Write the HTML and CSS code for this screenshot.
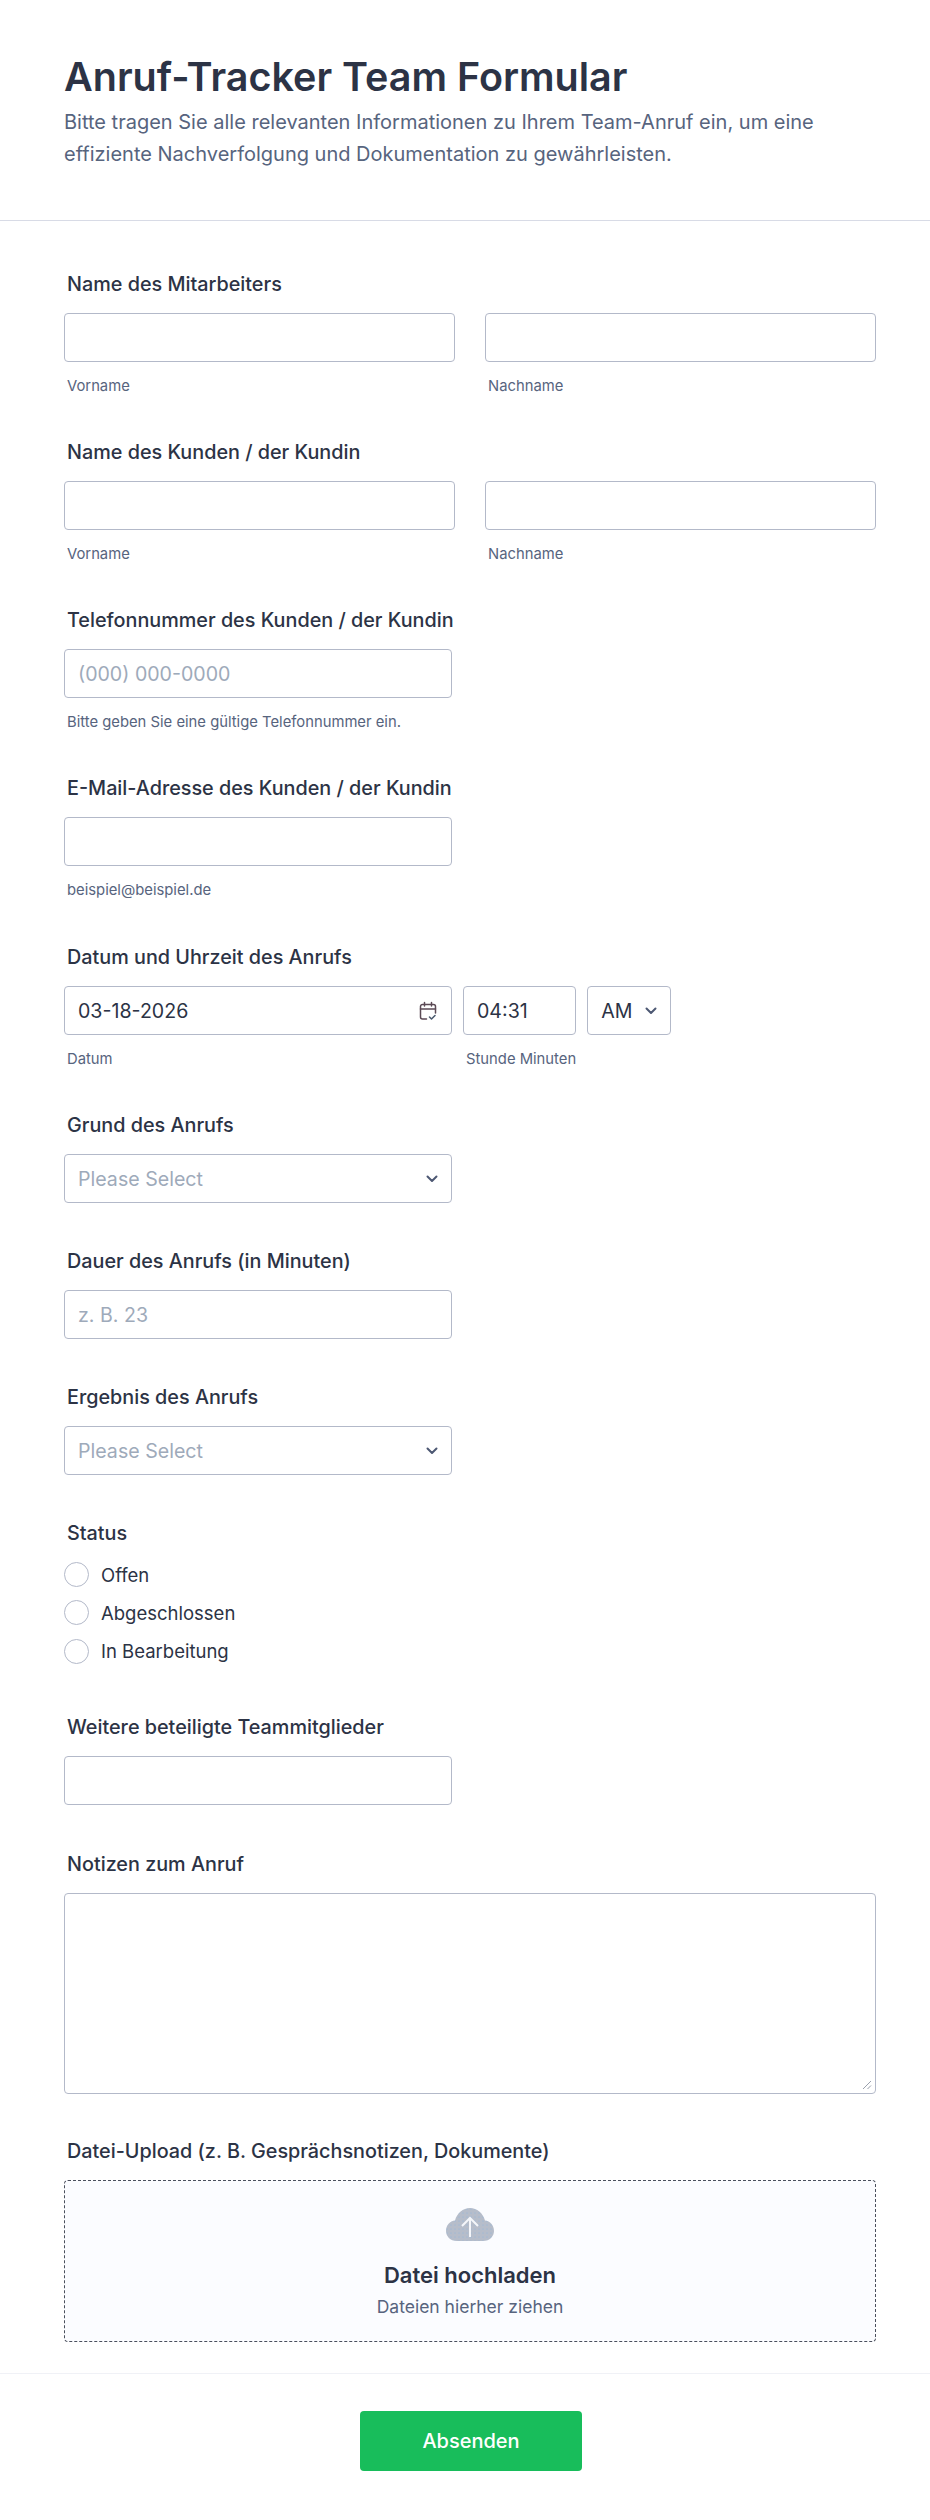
FILE: index.html
```html
<!DOCTYPE html>
<html lang="de">
<head>
<meta charset="utf-8">
<title>Anruf-Tracker Team Formular</title>
<link rel="stylesheet" href="styles.css">
</head>
<body>
<form class="form">
  <header class="head">
    <h1 class="title">Anruf-Tracker Team Formular</h1>
    <p class="desc">Bitte tragen Sie alle relevanten Informationen zu Ihrem Team-Anruf ein, um eine effiziente Nachverfolgung und Dokumentation zu gewährleisten.</p>
  </header>
  <div class="body">
    <div class="field">
      <div class="label">Name des Mitarbeiters</div>
      <div class="two">
        <div><div class="box"></div><div class="sub">Vorname</div></div>
        <div><div class="box"></div><div class="sub">Nachname</div></div>
      </div>
    </div>
    <div class="field">
      <div class="label">Name des Kunden / der Kundin</div>
      <div class="two">
        <div><div class="box"></div><div class="sub">Vorname</div></div>
        <div><div class="box"></div><div class="sub">Nachname</div></div>
      </div>
    </div>
    <div class="field">
      <div class="label">Telefonnummer des Kunden / der Kundin</div>
      <div class="box single ph">(000) 000-0000</div>
      <div class="sub">Bitte geben Sie eine gültige Telefonnummer ein.</div>
    </div>
    <div class="field email">
      <div class="label">E-Mail-Adresse des Kunden / der Kundin</div>
      <div class="box single"></div>
      <div class="sub">beispiel@beispiel.de</div>
    </div>
    <div class="field">
      <div class="label">Datum und Uhrzeit des Anrufs</div>
      <div class="dt">
        <div>
          <div class="box single val between">03-18-2026
            <svg class="cal" width="18" height="20" viewBox="0 0 18 20" fill="none" stroke="#5b4a55" stroke-width="1.5" stroke-linecap="round" stroke-linejoin="round"><path d="M7.500 18H3.500A2 2 0 0 1 1.500 16V5.500A2 2 0 0 1 3.500 3.500H14.500A2 2 0 0 1 16.500 5.500V12"/><path d="M1.500 8H16.500M5.500 1.500V5M12.500 1.500V5"/><path d="M10.500 16L12.500 18L16 14.500" stroke="#4a5a6e"/></svg>
          </div>
          <div class="sub">Datum</div>
        </div>
        <div>
          <div class="box time val">04:31</div>
          <div class="sub">Stunde Minuten</div>
        </div>
        <div class="box ampm val between">AM
          <svg width="12" height="8" viewBox="0 0 12 8" fill="none" stroke="#4d5873" stroke-width="2" stroke-linecap="round" stroke-linejoin="round"><path d="M1.500 1.500L6 6L10.500 1.500"/></svg>
        </div>
      </div>
    </div>
    <div class="field tight">
      <div class="label">Grund des Anrufs</div>
      <div class="box single ph between">Please Select
        <svg width="12" height="8" viewBox="0 0 12 8" fill="none" stroke="#4d5873" stroke-width="2" stroke-linecap="round" stroke-linejoin="round"><path d="M1.500 1.500L6 6L10.500 1.500"/></svg>
      </div>
    </div>
    <div class="field tight">
      <div class="label">Dauer des Anrufs (in Minuten)</div>
      <div class="box single ph">z. B. 23</div>
    </div>
    <div class="field tight">
      <div class="label">Ergebnis des Anrufs</div>
      <div class="box single ph between">Please Select
        <svg width="12" height="8" viewBox="0 0 12 8" fill="none" stroke="#4d5873" stroke-width="2" stroke-linecap="round" stroke-linejoin="round"><path d="M1.500 1.500L6 6L10.500 1.500"/></svg>
      </div>
    </div>
    <div class="field status">
      <div class="label">Status</div>
      <div class="radios">
        <div class="radio"><span class="dot"></span>Offen</div>
        <div class="radio"><span class="dot"></span>Abgeschlossen</div>
        <div class="radio"><span class="dot"></span>In Bearbeitung</div>
      </div>
    </div>
    <div class="field team">
      <div class="label">Weitere beteiligte Teammitglieder</div>
      <div class="box single"></div>
    </div>
    <div class="field notes">
      <div class="label">Notizen zum Anruf</div>
      <div class="box area">
        <svg class="grip" width="10" height="10" viewBox="0 0 10 10" fill="none" stroke="#9aa0ad" stroke-width="1"><path d="M1 9L9 1M5.500 9L9 5.500"/></svg>
      </div>
    </div>
    <div class="field last">
      <div class="label">Datei-Upload (z. B. Gesprächsnotizen, Dokumente)</div>
      <div class="drop">
        <svg class="cloud" width="48" height="34" viewBox="0 0 48 34">
          <defs><pattern id="dots" width="4" height="4" patternUnits="userSpaceOnUse"><rect width="4" height="4" fill="#b6bdca"/><circle cx="1" cy="1" r=".55" fill="#8fb4de"/></pattern></defs>
          <path fill="url(#dots)" d="M11 33C4 33 0 28 0 23C0 17 4 13 9 12.500C11 5 17 0 24 0C31 0 37 5 39 12.500C44 13 48 17 48 23C48 28 44 33 37 33Z"/>
          <path d="M24 29V10M16 18L24 10L32 18" fill="none" stroke="#f4f6fa" stroke-width="2"/>
        </svg>
        <div class="drop-t">Datei hochladen</div>
        <div class="drop-s">Dateien hierher ziehen</div>
      </div>
    </div>
  </div>
  <footer class="foot">
    <button type="button" class="send">Absenden</button>
  </footer>
</form>
</body>
</html>
```
FILE: styles.css
```css
* { box-sizing: border-box; }
html, body { margin: 0; padding: 0; background: #fff; }
body { font-family: Inter, "Liberation Sans", sans-serif; color: #2c3345; }
.form { width: 930px; height: 2520px; overflow: hidden; }
.head { height: 221px; padding: 53px 64px 0; border-bottom: 1px solid #d8dbe6; }
.title { margin: 0; font-size: 39.500px; line-height: 48px; font-weight: 600; color: #2c3345; }
.desc { margin: 5px 0 0; font-size: 20px; line-height: 32px; color: #57647e; width: 780px; }
.body { padding: 51px 55px 0 64px; }
.field { height: 168px; }
.field.email { height: 169px; }
.field.tight { height: 136px; }
.field.status { height: 194px; }
.field.team { height: 137px; }
.field.notes { height: 287px; }
.field.last { height: 234px; }
.label { font-size: 19.800px; line-height: 24px; font-weight: 450; padding-left: 3px; margin-bottom: 17px; color: #2c3345; white-space: nowrap; }
.two { display: grid; grid-template-columns: 391px 391px; column-gap: 30px; }
.box { height: 49px; border: 1px solid #b3b9c9; border-radius: 4px; background: #fff; display: flex; align-items: center; padding: 0 13px; font-size: 19.600px; }
.single { width: 388px; }
.ph { color: #9eaaba; }
.val { color: #2c3345; }
.between { justify-content: space-between; }
.sub { font-size: 14.800px; line-height: 18px; color: #57647e; padding-left: 3px; margin-top: 15px; white-space: nowrap; }
.dt { display: flex; align-items: flex-start; gap: 11px; }
.time { width: 113px; }
.ampm { width: 84px; }
.cal { margin-right: 1px; }
.radios { display: flex; flex-direction: column; gap: 13.330px; margin-top: 1px; }
.radio { display: flex; align-items: center; height: 25px; gap: 12px; font-size: 18.500px; color: #2c3345; }
.dot { width: 25px; height: 25px; border: 1px solid #b3b9c9; border-radius: 50%; background: #fff; }
.area { width: 812px; height: 201px; position: relative; }
.grip { position: absolute; right: 3px; bottom: 3px; }
.drop { width: 812px; height: 162px; border: 1px dashed #4a4f5c; border-radius: 4px; background: #fbfcff; display: flex; flex-direction: column; align-items: center; padding-top: 27px; }
.cloud { display: block; }
.drop-t { font-size: 22px; line-height: 28px; font-weight: 600; margin-top: 19px; color: #2c3345; }
.drop-s { font-size: 17.500px; line-height: 20px; margin-top: 8px; color: #57647e; }
.foot { border-top: 1px solid #f0f1f6; display: flex; justify-content: center; padding: 37px 0 0 12px; }
.send { width: 222px; height: 60px; border: 0; border-radius: 4px; background: #18bd5b; color: #fff; font: 500 20px Inter, "Liberation Sans", sans-serif; }
```
